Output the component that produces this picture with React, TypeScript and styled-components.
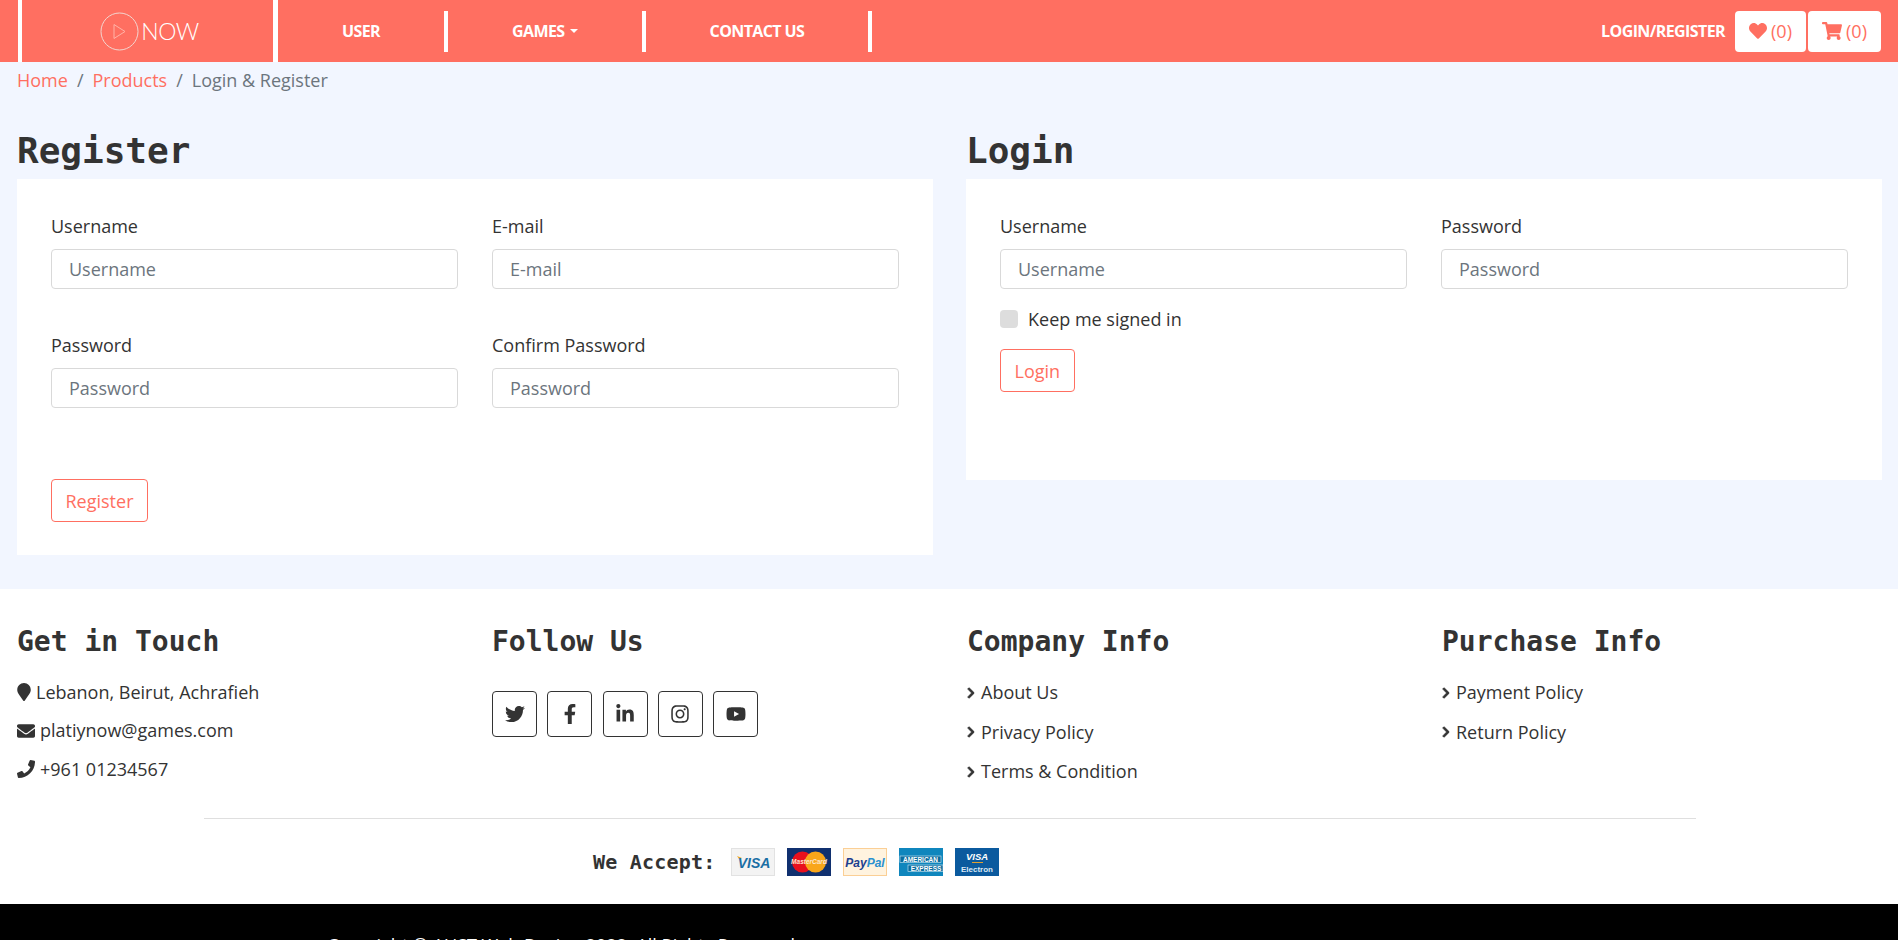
import React from 'react'
import styled, {createGlobalStyle} from 'styled-components'
import {
  FaHeart,
  FaShoppingCart,
  FaMapMarker,
  FaEnvelope,
  FaPhone,
  FaChevronRight,
  FaTwitter,
  FaFacebookF,
  FaLinkedinIn,
  FaInstagram,
  FaYoutube,
} from 'react-icons/fa'

const coral = '#ff6f61'
const ink = '#333333'
const sans = `'Open Sans', 'Noto Sans', sans-serif`
const mono = `'DejaVu Sans Mono', 'Liberation Mono', monospace`

const GlobalStyle = createGlobalStyle`
  html, body {
    margin: 0;
    padding: 0;
    background: #fff;
    overflow-x: hidden;
  }
  body {
    font-family: ${sans};
    font-size: 18px;
    line-height: 1.5;
    color: ${ink};
  }
  * {
    box-sizing: border-box;
  }
`

/* header */
const Header = styled.header`
  height: 62px;
  background: ${coral};
  display: flex;
  align-items: center;
  padding: 0 17px 0 18px;
`

const LogoBox = styled.a`
  height: 62px;
  width: 260px;
  flex: none;
  display: flex;
  align-items: center;
  justify-content: center;
  gap: 2px;
  border-left: 4px solid #fff;
  border-right: 5px solid #fff;
  padding-left: 4px;
`

const LogoWord = styled.span`
  font-family: 'Lato', sans-serif;
  font-weight: 300;
  font-size: 23px;
  line-height: 1;
  color: #fff;
  letter-spacing: -0.5px;
`

const Nav = styled.nav`
  display: flex;
  align-items: center;
`

const NavItem = styled.a`
  height: 41px;
  padding: 0 64px;
  display: flex;
  align-items: center;
  border-right: 4px solid #fff;
  color: #fff;
  font-size: 16px;
  font-weight: 700;
  letter-spacing: -0.6px;
  white-space: nowrap;
`

const Caret = styled.span`
  display: inline-block;
  margin-left: 5px;
  border-top: 4.5px solid #fff;
  border-left: 4.5px solid transparent;
  border-right: 4.5px solid transparent;
`

const HeaderRight = styled.div`
  margin-left: auto;
  display: flex;
  align-items: center;
  gap: 2px;
`

const LoginLink = styled.a`
  color: #fff;
  font-size: 16px;
  font-weight: 700;
  letter-spacing: -0.6px;
  margin-right: 8px;
`

const CountButton = styled.button<{$w: number}>`
  width: ${(p) => p.$w}px;
  height: 41px;
  background: #fff;
  border: none;
  border-radius: 4px;
  color: ${coral};
  font-family: ${sans};
  font-size: 18px;
  display: flex;
  align-items: center;
  justify-content: center;
  gap: 4px;
  padding: 0;
`

/* breadcrumb */
const Crumbs = styled.div`
  background: #f2f6ff;
  padding: 5px 17px 0;
  height: 67px;
  display: flex;
  gap: 9px;
  color: #6c757d;
  font-size: 18px;
`

const CrumbLink = styled.a`
  color: ${coral};
`

/* forms */
const Main = styled.main`
  background: #f2f6ff;
  display: grid;
  grid-template-columns: 1fr 1fr;
  padding-bottom: 34px;
`

const Column = styled.section`
  padding: 0 16px 0 17px;
`

const PageTitle = styled.h2`
  font-family: ${mono};
  font-weight: 700;
  font-size: 36px;
  line-height: 43px;
  margin: 0 0 7px;
  color: ${ink};
`

const Card = styled.div<{$h: number}>`
  background: #fff;
  padding: 34px;
  height: ${(p) => p.$h}px;
`

const FieldGrid = styled.div`
  display: grid;
  grid-template-columns: 1fr 1fr;
  column-gap: 34px;
  row-gap: 43px;
`

const Field = styled.div`
  display: flex;
  flex-direction: column;
`

const Label = styled.label`
  font-size: 18px;
  line-height: 27px;
  margin-bottom: 9px;
  color: ${ink};
`

const Input = styled.input`
  height: 40px;
  border: 1px solid #d9d9d9;
  border-radius: 4px;
  padding: 0 17px;
  font-family: ${sans};
  font-size: 18px;
  background: #fff;
  width: 100%;
  outline: none;
  &::placeholder {
    color: #6c757d;
    opacity: 1;
  }
`

const CheckRow = styled.div`
  display: flex;
  align-items: center;
  gap: 10px;
  margin-top: 21px;
  line-height: 18px;
  font-size: 18px;
`

const CheckBox = styled.span`
  width: 18px;
  height: 18px;
  border-radius: 4px;
  background: #dddddd;
`

const SubmitButton = styled.button<{$top: number}>`
  display: block;
  margin-top: ${(p) => p.$top}px;
  height: 43px;
  padding: 0 13.5px;
  background: #fff;
  border: 1px solid ${coral};
  border-radius: 4px;
  color: ${coral};
  font-family: ${sans};
  font-size: 18px;
`

/* footer */
const Footer = styled.footer`
  background: #fff;
`

const FooterGrid = styled.div`
  display: grid;
  grid-template-columns: repeat(4, 475px);
  padding: 36px 0 0;
  height: 229px;
`

const FooterCol = styled.div`
  padding: 0 17px;
`

const FooterTitle = styled.h4`
  font-family: ${mono};
  font-weight: 700;
  font-size: 28px;
  line-height: 34px;
  margin: 0 0 14px;
  color: ${ink};
`

const InfoRow = styled.div`
  display: flex;
  align-items: center;
  gap: 5px;
  height: 38.5px;
  font-size: 18px;
  color: ${ink};
`

const LinkRow = styled.a`
  display: flex;
  align-items: center;
  gap: 6px;
  height: 39.5px;
  font-size: 18px;
  color: ${ink};
`

const Chevron = styled(FaChevronRight)`
  width: 8px;
  height: 12px;
  stroke: currentColor;
  stroke-width: 40px;
`

const Marker = styled(FaMapMarker)`
  width: 14px;
  height: 18px;
`

const SocialRow = styled.div`
  display: flex;
  gap: 10.25px;
  margin-top: 32px;
`

const SocialButton = styled.a`
  width: 45px;
  height: 46px;
  display: flex;
  align-items: center;
  justify-content: center;
  border: 1px solid ${ink};
  border-radius: 4px;
  color: ${ink};
  font-size: 20px;
`

const Rule = styled.hr`
  margin: 0 202px 0 204px;
  border: none;
  border-top: 1px solid #dfdfdf;
`

const AcceptRow = styled.div`
  height: 85px;
  padding: 29px 0 0 593px;
  display: flex;
  gap: 12px;
  align-items: flex-start;
`

const AcceptLabel = styled.strong`
  font-family: ${mono};
  font-size: 20px;
  line-height: 28px;
  letter-spacing: 0.2px;
  width: 126px;
  color: ${ink};
`

const CopyBar = styled.div`
  background: #000;
  color: #fff;
  height: 70px;
  padding: 28px 0 0 327px;
  font-size: 18px;
`

const VisaCard = () => (
  <svg width="44" height="28" viewBox="0 0 44 28">
    <rect x=".5" y=".5" width="43" height="27" fill="#f3f3f3" stroke="#e2e2e2" />
    <path d="M6 8l5 2-3 1z" fill="#f0a81e" />
    <text x="23" y="19.5" textAnchor="middle" fontFamily="Liberation Sans" fontStyle="italic" fontWeight="700" fontSize="14" fill="#1a6fa5">VISA</text>
  </svg>
)

const MasterCard = () => (
  <svg width="44" height="28" viewBox="0 0 44 28">
    <rect width="44" height="28" fill="#10306f" />
    <circle cx="15.5" cy="14" r="10.5" fill="#e8101d" />
    <circle cx="28.5" cy="14" r="10.5" fill="#f9a61a" />
    <text x="22" y="16" textAnchor="middle" fontFamily="Liberation Sans" fontStyle="italic" fontWeight="700" fontSize="6.5" fill="#fde6cf">MasterCard</text>
  </svg>
)

const PayPalCard = () => (
  <svg width="44" height="28" viewBox="0 0 44 28">
    <rect x=".5" y=".5" width="43" height="27" fill="#fff3df" stroke="#fbcf95" />
    <text x="22" y="18.5" textAnchor="middle" fontFamily="Liberation Sans" fontStyle="italic" fontWeight="700" fontSize="12">
      <tspan fill="#1d3f8f">Pay</tspan>
      <tspan fill="#2a90d0">Pal</tspan>
    </text>
  </svg>
)

const AmexCard = () => (
  <svg width="44" height="28" viewBox="0 0 44 28">
    <rect width="44" height="28" fill="#0f86bd" />
    <rect x="1" y="8" width="41" height="6.5" fill="#0a6c9e" stroke="#d8eef7" strokeWidth=".6" />
    <rect x="9" y="17" width="35" height="6.5" fill="#0a6c9e" stroke="#d8eef7" strokeWidth=".6" />
    <text x="21.5" y="13.5" textAnchor="middle" fontFamily="Liberation Sans" fontWeight="700" fontSize="6.5" fill="#fff">AMERICAN</text>
    <text x="27" y="22.5" textAnchor="middle" fontFamily="Liberation Sans" fontWeight="700" fontSize="6.5" fill="#fff">EXPRESS</text>
  </svg>
)

const ElectronCard = () => (
  <svg width="44" height="28" viewBox="0 0 44 28">
    <rect width="44" height="28" fill="#0b5a9e" />
    <text x="22" y="11.5" textAnchor="middle" fontFamily="Liberation Sans" fontStyle="italic" fontWeight="700" fontSize="9.5" fill="#fff">VISA</text>
    <path d="M17 14.5h11" stroke="#e0a030" strokeWidth="1" />
    <text x="22" y="24" textAnchor="middle" fontFamily="Liberation Sans" fontWeight="700" fontSize="8" fill="#dbe9f5">Electron</text>
  </svg>
)

const PlayLogo = () => (
  <svg width="39" height="39" viewBox="0 0 39 39" fill="none">
    <circle cx="19.5" cy="19.5" r="18.5" stroke="#f3d6d0" strokeWidth="1" />
    <path d="M14 12.5v14l11-7z" stroke="#ffb3a8" strokeWidth="1" strokeLinejoin="round" />
  </svg>
)

const App: React.FC = () => {
  return (
    <>
      <GlobalStyle />
      <Header>
        <LogoBox>
          <PlayLogo />
          <LogoWord>NOW</LogoWord>
        </LogoBox>
        <Nav>
          <NavItem>USER</NavItem>
          <NavItem>
            GAMES
            <Caret />
          </NavItem>
          <NavItem>CONTACT US</NavItem>
        </Nav>
        <HeaderRight>
          <LoginLink>LOGIN/REGISTER</LoginLink>
          <CountButton $w={71}>
            <FaHeart size={18} /> (0)
          </CountButton>
          <CountButton $w={73}>
            <FaShoppingCart size={20} /> (0)
          </CountButton>
        </HeaderRight>
      </Header>

      <Crumbs>
        <CrumbLink>Home</CrumbLink>
        <span>/</span>
        <CrumbLink>Products</CrumbLink>
        <span>/</span>
        <span>Login &amp; Register</span>
      </Crumbs>

      <Main>
        <Column>
          <PageTitle>Register</PageTitle>
          <Card $h={376}>
            <FieldGrid>
              <Field>
                <Label>Username</Label>
                <Input placeholder="Username" />
              </Field>
              <Field>
                <Label>E-mail</Label>
                <Input placeholder="E-mail" />
              </Field>
              <Field>
                <Label>Password</Label>
                <Input placeholder="Password" />
              </Field>
              <Field>
                <Label>Confirm Password</Label>
                <Input placeholder="Password" />
              </Field>
            </FieldGrid>
            <SubmitButton $top={71}>Register</SubmitButton>
          </Card>
        </Column>
        <Column>
          <PageTitle>Login</PageTitle>
          <Card $h={301}>
            <FieldGrid>
              <Field>
                <Label>Username</Label>
                <Input placeholder="Username" />
                <CheckRow>
                  <CheckBox />
                  Keep me signed in
                </CheckRow>
              </Field>
              <Field>
                <Label>Password</Label>
                <Input placeholder="Password" />
              </Field>
            </FieldGrid>
            <SubmitButton $top={21}>Login</SubmitButton>
          </Card>
        </Column>
      </Main>

      <Footer>
        <FooterGrid>
          <FooterCol>
            <FooterTitle>Get in Touch</FooterTitle>
            <InfoRow>
              <Marker /> Lebanon, Beirut, Achrafieh
            </InfoRow>
            <InfoRow>
              <FaEnvelope size={18} /> platiynow@games.com
            </InfoRow>
            <InfoRow>
              <FaPhone size={18} /> +961 01234567
            </InfoRow>
          </FooterCol>
          <FooterCol>
            <FooterTitle>Follow Us</FooterTitle>
            <SocialRow>
              <SocialButton>
                <FaTwitter />
              </SocialButton>
              <SocialButton>
                <FaFacebookF />
              </SocialButton>
              <SocialButton>
                <FaLinkedinIn />
              </SocialButton>
              <SocialButton>
                <FaInstagram />
              </SocialButton>
              <SocialButton>
                <FaYoutube />
              </SocialButton>
            </SocialRow>
          </FooterCol>
          <FooterCol>
            <FooterTitle>Company Info</FooterTitle>
            <LinkRow>
              <Chevron /> About Us
            </LinkRow>
            <LinkRow>
              <Chevron /> Privacy Policy
            </LinkRow>
            <LinkRow>
              <Chevron /> Terms &amp; Condition
            </LinkRow>
          </FooterCol>
          <FooterCol>
            <FooterTitle>Purchase Info</FooterTitle>
            <LinkRow>
              <Chevron /> Payment Policy
            </LinkRow>
            <LinkRow>
              <Chevron /> Return Policy
            </LinkRow>
          </FooterCol>
        </FooterGrid>
        <Rule />
        <AcceptRow>
          <AcceptLabel>We Accept:</AcceptLabel>
          <VisaCard />
          <MasterCard />
          <PayPalCard />
          <AmexCard />
          <ElectronCard />
        </AcceptRow>
        <CopyBar>Copyright © AUST Web Design 2022. All Rights Reserved</CopyBar>
      </Footer>
    </>
  )
}

export default App
